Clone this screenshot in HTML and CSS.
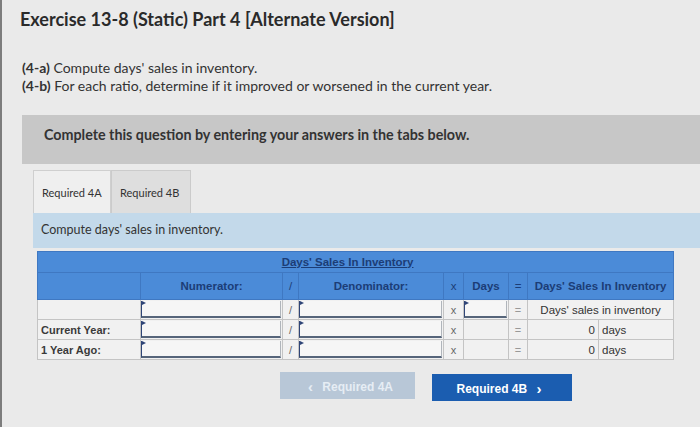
FILE: index.html
```html
<!DOCTYPE html>
<html>
<head>
<meta charset="utf-8">
<link rel="stylesheet" href="styles.css">
</head>
<body>
<div class="page">
  <h1 class="title">Exercise 13-8 (Static) Part 4 [Alternate Version]</h1>
  <div class="instructions">
    <p><b>(4-a)</b> Compute days' sales in inventory.</p>
    <p><b>(4-b)</b> For each ratio, determine if it improved or worsened in the current year.</p>
  </div>
  <div class="banner">Complete this question by entering your answers in the tabs below.</div>
  <div class="work">
    <div class="tabs">
      <div class="tab active">Required 4A</div>
      <div class="tab">Required 4B</div>
    </div>
    <div class="prompt">Compute days' sales in inventory.</div>
    <table class="calc">
      <colgroup>
        <col class="c-label"><col class="c-num"><col class="c-op"><col class="c-den"><col class="c-x"><col class="c-days"><col class="c-eq"><col class="c-val"><col class="c-unit">
      </colgroup>
      <thead>
        <tr class="h1"><th colspan="9"><span class="u">Days' Sales In Inventory</span></th></tr>
        <tr class="h2">
          <th></th>
          <th>Numerator:</th>
          <th class="op">/</th>
          <th>Denominator:</th>
          <th class="op">x</th>
          <th>Days</th>
          <th class="op">=</th>
          <th colspan="2">Days' Sales In Inventory</th>
        </tr>
      </thead>
      <tbody>
        <tr>
          <td class="label"></td>
          <td class="in"><div class="box"></div></td>
          <td class="op">/</td>
          <td class="in"><div class="box"></div></td>
          <td class="op">x</td>
          <td class="in"><div class="box"></div></td>
          <td class="op eq">=</td>
          <td class="res" colspan="2">Days' sales in inventory</td>
        </tr>
        <tr>
          <td class="label">Current Year:</td>
          <td class="in"><div class="box"></div></td>
          <td class="op">/</td>
          <td class="in"><div class="box"></div></td>
          <td class="op">x</td>
          <td></td>
          <td class="op eq">=</td>
          <td class="val">0</td>
          <td class="unit">days</td>
        </tr>
        <tr>
          <td class="label">1 Year Ago:</td>
          <td class="in"><div class="box"></div></td>
          <td class="op">/</td>
          <td class="in"><div class="box"></div></td>
          <td class="op">x</td>
          <td></td>
          <td class="op eq">=</td>
          <td class="val">0</td>
          <td class="unit">days</td>
        </tr>
      </tbody>
    </table>
    <div class="nav">
      <button class="btn prev"><span class="chev">&lsaquo;</span> Required 4A</button>
      <button class="btn next">Required 4B <span class="chev">&rsaquo;</span></button>
    </div>
  </div>
</div>
</body>
</html>
```

FILE: styles.css
```css
html, body {
  margin: 0;
  padding: 0;
}
body {
  background: #eaeaea;
  width: 700px;
  height: 427px;
  overflow: hidden;
  font-family: Lato, "Open Sans", sans-serif;
  color: #333;
}
.page {
  border-left: 2px solid #7d7d7d;
  height: 427px;
  box-sizing: border-box;
}
.title {
  margin: 0;
  padding: 8px 0 0 18px;
  font-size: 18px;
  line-height: 22px;
  font-weight: 700;
  color: #2a2a2a;
}
.instructions {
  margin-top: 29px;
  padding-left: 20px;
  font-size: 14px;
  line-height: 18px;
  color: #333;
}
.instructions p {
  margin: 0;
}
.banner {
  margin: 20px 0 0 20px;
  height: 49px;
  box-sizing: border-box;
  padding: 12px 0 0 22px;
  background: #c7c7c7;
  font-size: 14.3px;
  line-height: 16px;
  font-weight: 700;
  color: #333;
}
.work {
  margin: 6px 0 0 31px;
}
.tabs {
  display: flex;
  align-items: flex-start;
}
.tab {
  height: 43px;
  box-sizing: border-box;
  padding: 0 0 0 8px;
  font-size: 11px;
  line-height: 43px;
  color: #333;
  border: 1px solid #cbcbcb;
  border-bottom: none;
  background: #dedede;
  width: 80px;
}
.tab.active {
  width: 78px;
  background: #efefef;
  border-color: #cfcfcf;
}
.prompt {
  height: 35px;
  box-sizing: border-box;
  padding: 0 0 0 8px;
  background: #c3d9ea;
  font-size: 12.5px;
  line-height: 34px;
  color: #333;
}
.calc {
  margin: 3px 0 0 4px;
  border-collapse: collapse;
  table-layout: fixed;
  width: 636px;
  font-family: "Liberation Sans", Arial, sans-serif;
  font-size: 11.5px;
}
.c-label { width: 103px; }
.c-num { width: 142px; }
.c-op { width: 16px; }
.c-den { width: 145px; }
.c-x { width: 20px; }
.c-days { width: 45px; }
.c-eq { width: 19px; }
.c-val { width: 71px; }
.c-unit { width: 75px; }
.calc th {
  background: #4b8bd8;
  color: #1c3d76;
  font-weight: 700;
  padding: 0;
  border: 1px solid #3f78c2;
  text-align: center;
}
.calc .h1 th {
  height: 20px;
}
.calc .h1 .u {
  text-decoration: underline;
  position: relative;
  left: -8px;
}
.calc .h2 th {
  height: 26px;
}
.calc .h2 th.op {
  font-weight: 400;
}
.calc tbody tr {
  height: 20px;
}
.calc td {
  height: 19px;
  padding: 0;
  border: 1px solid #c4c4c4;
  background: #f1f1f1;
  color: #333;
  line-height: 14px;
}
.calc td.label {
  padding-left: 3px;
  font-weight: 700;
  color: #3a3a3a;
  font-size: 11px;
}
.calc td.op {
  text-align: center;
  color: #666;
  font-size: 11px;
}
.calc td.op.eq {
  color: #999;
}
.calc td.in {
  padding: 0 1px 0 0;
  vertical-align: top;
}
.box {
  position: relative;
  height: 15px;
  margin-top: 1px;
  background: #f6f6f6;
  border-left: 1px solid #2f4577;
  border-right: 1px solid #b0b5bb;
  border-bottom: 2px solid #56657a;
}
.box::before {
  content: "";
  position: absolute;
  left: 0;
  top: 0;
  border-left: 4px solid #2f4577;
  border-top: 2px solid transparent;
  border-bottom: 2px solid transparent;
}
.calc td.res {
  text-align: center;
}
.calc td.val {
  text-align: right;
  padding-right: 3px;
}
.calc td.unit {
  padding-left: 3px;
}
.nav {
  display: flex;
  align-items: flex-start;
  margin: 12px 0 0 247px;
  gap: 17px;
}
.btn {
  border: none;
  font-family: "Liberation Sans", Arial, sans-serif;
  font-weight: 700;
  font-size: 12px;
  padding: 0;
  height: 27px;
}
.btn.prev {
  width: 135px;
  background: #b8c7d7;
  color: #e6edf4;
}
.btn.next {
  width: 140px;
  margin-top: 2px;
  background: #1b5db0;
  color: #fff;
}
.chev {
  font-size: 15px;
  margin: 0 6px;
  position: relative;
  top: 1px;
}
```
